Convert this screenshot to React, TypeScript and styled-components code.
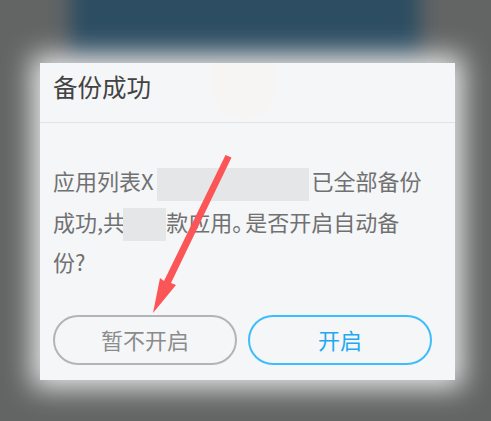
import React from "react";
import styled, { createGlobalStyle } from "styled-components";

const GlobalStyle = createGlobalStyle`
  html, body {
    margin: 0;
    padding: 0;
    background: #636565;
  }
  #root {
    width: 491px;
    height: 421px;
  }
`;

const Screen = styled.div`
  position: relative;
  width: 491px;
  height: 421px;
  overflow: hidden;
  padding: 63px 36px 41px 40px;
  box-sizing: border-box;
  background: #636565;
  font-family: "Noto Sans CJK SC", "Liberation Sans", sans-serif;
`;

const BlurredBanner = styled.div`
  position: absolute;
  left: 70px;
  top: -30px;
  width: 350px;
  height: 90px;
  background: #2d4d62;
  filter: blur(10px);
`;

const Dialog = styled.div`
  position: relative;
  width: 415px;
  height: 317px;
  background: #f5f6f8;
  box-shadow: 0 0 26px 8px rgba(255, 255, 255, 0.85);
  display: flex;
  flex-direction: column;
`;

const GhostCircle = styled.div`
  position: absolute;
  left: 172px;
  top: 0;
  width: 64px;
  height: 56px;
  border-radius: 0 0 32px 32px;
  background: #f6f5f4;
`;

const Header = styled.div`
  position: relative;
  height: 60px;
  flex: none;
  box-sizing: border-box;
  border-bottom: 1px solid #e2e3e5;
  padding: 5px 0 0 13px;
  font-size: 24.5px;
  line-height: 37px;
  color: #434343;
`;

const Message = styled.div`
  position: relative;
  flex: 1;
  padding: 37px 26px 0 13px;
  font-size: 22px;
  line-height: 40.5px;
  color: #717171;
`;

const Redacted = styled.span<{ $width: number; $before?: number; $after?: number }>`
  display: inline-block;
  width: ${({ $width }) => $width}px;
  height: 33px;
  margin-left: ${({ $before }) => $before ?? 0}px;
  margin-right: ${({ $after }) => $after ?? 0}px;
  vertical-align: middle;
  background: #e5e6e8;
`;

const NarrowStop = styled.span`
  letter-spacing: -9px;
`;

const Actions = styled.div`
  position: relative;
  display: flex;
  gap: 11px;
  padding: 0 23px 15px 13px;
`;

const PillButton = styled.div<{ $primary?: boolean }>`
  flex: 1;
  height: 50px;
  box-sizing: border-box;
  border-radius: 25px;
  border: 2px solid ${({ $primary }) => ($primary ? "#3dbdfb" : "#b2b4b5")};
  color: ${({ $primary }) => ($primary ? "#1fa9f2" : "#8a8c8c")};
  display: flex;
  align-items: center;
  justify-content: center;
  padding-bottom: 2px;
  font-size: 22px;
  line-height: 44px;
`;

const ArrowOverlay = styled.svg`
  position: absolute;
  left: 0;
  top: 0;
  pointer-events: none;
`;

export default function App() {
  return (
    <Screen>
      <GlobalStyle />
      <BlurredBanner />
      <Dialog>
        <GhostCircle />
        <Header>备份成功</Header>
        <Message>
          应用列表X<Redacted $width={152} $before={3} $after={3} />已全部备份
          <br />
          成功,共<Redacted $width={43} $before={-2} />款应用<NarrowStop>。</NarrowStop>是否开启自动备
          <br />
          份?
        </Message>
        <Actions>
          <PillButton>暂不开启</PillButton>
          <PillButton $primary>开启</PillButton>
        </Actions>
      </Dialog>
      <ArrowOverlay width="491" height="421" viewBox="0 0 491 421">
        <path
          d="M225.5 155L231.5 157.5L171 283L176 285L153 313L160 278L164 281Z"
          fill="#fb5557"
        />
      </ArrowOverlay>
    </Screen>
  );
}
